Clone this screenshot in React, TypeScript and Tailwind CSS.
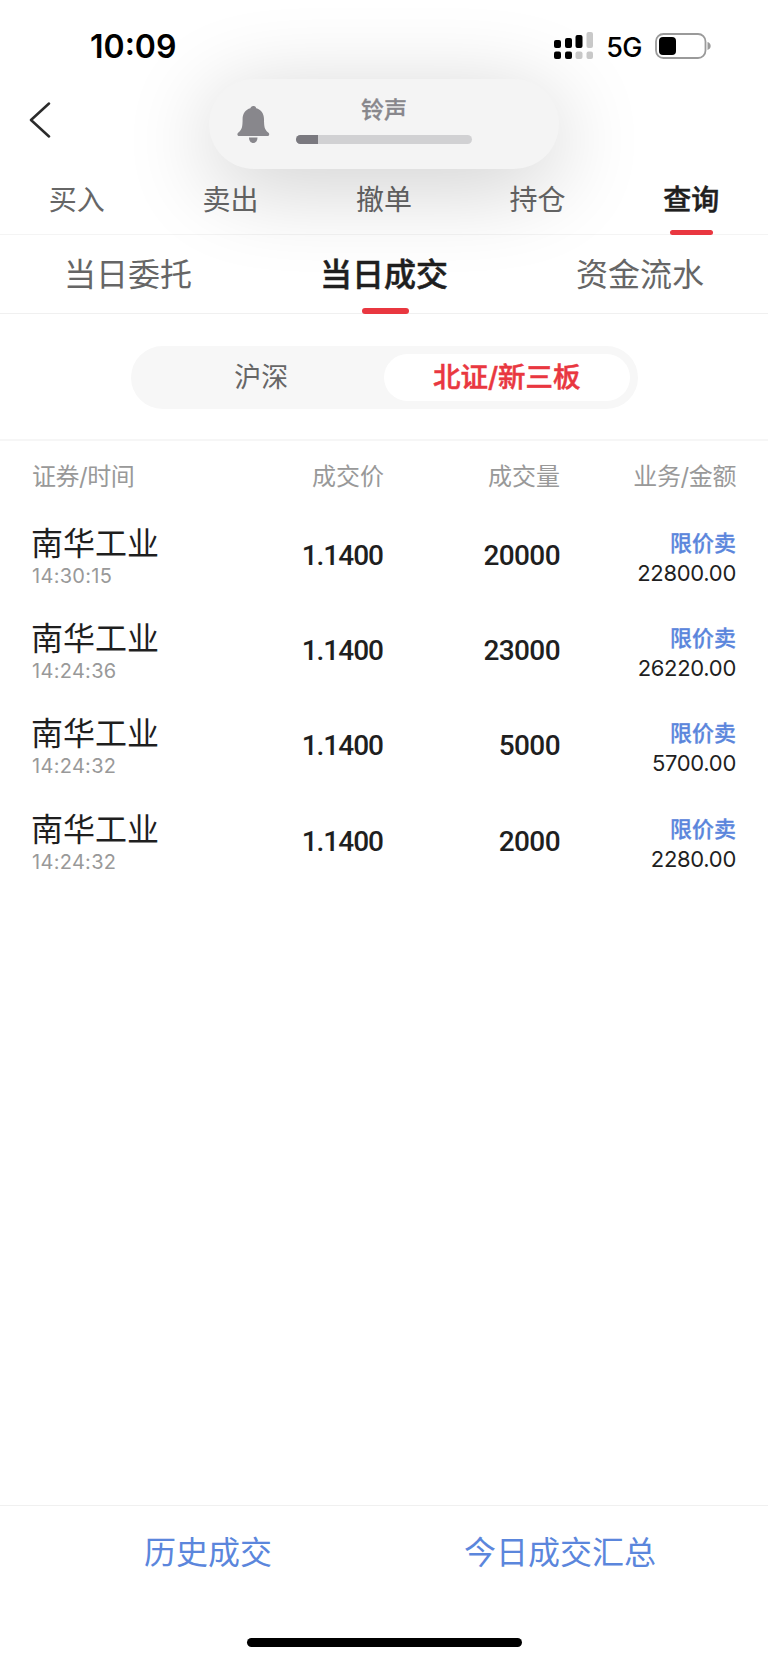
import React from 'react';

const tabs = ['买入', '卖出', '撤单', '持仓', '查询'];
const subTabs = ['当日委托', '当日成交', '资金流水'];

const trades = [
  { name: '南华工业', time: '14:30:15', price: '1.1400', volume: '20000', type: '限价卖', amount: '22800.00' },
  { name: '南华工业', time: '14:24:36', price: '1.1400', volume: '23000', type: '限价卖', amount: '26220.00' },
  { name: '南华工业', time: '14:24:32', price: '1.1400', volume: '5000', type: '限价卖', amount: '5700.00' },
  { name: '南华工业', time: '14:24:32', price: '1.1400', volume: '2000', type: '限价卖', amount: '2280.00' },
];

/** Dual SIM signal: bars on top, dots below. */
const SignalIcon: React.FC = () => (
  <svg width="40" height="28" viewBox="0 0 40 28">
    <rect x="0" y="8" width="7" height="8" rx="2" />
    <rect x="11" y="6" width="7" height="10" rx="2" />
    <rect x="21.5" y="3" width="7" height="13" rx="2" />
    <rect x="32.5" y="0" width="6.5" height="16" rx="2" fill="#c9c9c9" />
    <rect x="0" y="19.5" width="7" height="7.5" rx="2" />
    <rect x="11" y="19.5" width="7" height="7.5" rx="2" />
    <rect x="21.5" y="19.5" width="7" height="7.5" rx="2" fill="#c9c9c9" />
    <rect x="32.5" y="19.5" width="6.5" height="7.5" rx="2" fill="#c9c9c9" />
  </svg>
);

const BatteryIcon: React.FC = () => (
  <svg width="57" height="26" viewBox="0 0 57 26">
    <rect x="1" y="1" width="49.5" height="24" rx="7.5" fill="none" stroke="#9a9a9a" strokeWidth="1.8" />
    <rect x="4" y="4" width="17" height="18" rx="4" />
    <path d="M52.5 9c2 .6 3.2 2.200 3.200 4s-1.200 3.400-3.200 4z" fill="#9a9a9a" />
  </svg>
);

const StatusBar: React.FC = () => (
  <div className="flex h-[76px] items-center justify-between pl-[90px] pr-[56px] pt-[15px]">
    <span className="pt-[2px] text-[32px] font-semibold leading-none text-black">10:09</span>
    <div className="flex items-center">
      <SignalIcon />
      <span className="ml-[12px] mr-[13px] pt-[3px] text-[27px] font-medium leading-none tracking-[-0.5px] text-black">5G</span>
      <BatteryIcon />
    </div>
  </div>
);

/** Floating ringer volume HUD. */
const RingerHud: React.FC = () => (
  <div className="absolute left-[209px] top-[79px] flex h-[90px] w-[350px] rounded-full bg-[#f4f4f4] shadow-[0_16px_90px_rgba(0,0,0,0.2)]">
    <svg className="ml-[28px] mt-[27px]" width="33" height="38" viewBox="0 0 33 38" fill="#88878c">
      <path d="M16.300 0c1.600 0 2.700 1 2.900 2.300C24 3.500 27 7.500 27 13c0 8 .6 10.500 4.200 13.500.9.700 1 1.200 1 2 0 .9-.6 1.500-1.600 1.500H2c-1 0-1.600-.6-1.600-1.500 0-.8.2-1.300 1-2C5 23.500 5.600 21 5.600 13c0-5.500 3-9.500 7.800-10.700C13.600 1 14.700 0 16.300 0z" />
      <path d="M12 31.500h8.500c0 3.300-1.700 5.500-4.200 5.500S12 34.800 12 31.500z" />
    </svg>
    <div className="ml-[26px] flex w-[176px] flex-col items-center pt-[18px]">
      <span className="text-[23px] font-medium leading-[26px] text-[#88878c] [-webkit-text-stroke:0.3px]">铃声</span>
      <div className="mt-[12px] h-[9px] w-full overflow-hidden rounded-full bg-[#d1d1d3]">
        <div className="h-full w-[22px] bg-[#7a797f]" />
      </div>
    </div>
  </div>
);

const App: React.FC = () => (
  <div
    lang="zh-CN"
    className="relative flex h-[1662px] w-[768px] flex-col overflow-hidden bg-white font-['Inter','Noto_Sans_CJK_SC',sans-serif] text-[#1f1f1f]"
  >
    <StatusBar />

    <div className="flex h-[88px] items-center pl-[29px]">
      <svg width="22" height="36" viewBox="0 0 22 36" fill="none" stroke="#2b2b2b" strokeWidth="2.500" strokeLinecap="round" strokeLinejoin="round">
        <path d="M20 1.500 2 18l18 16.500" />
      </svg>
    </div>

    <div className="flex h-[71px] border-b border-[#f4f4f4]">
      {tabs.map((tab) => (
        <div
          key={tab}
          className={`relative flex flex-1 justify-center pt-[16px] text-[28px] leading-[40px] ${tab === '查询' ? 'font-medium text-[#1f1f1f] [-webkit-text-stroke:0.5px]' : 'text-[#666]'}`}
        >
          {tab}
          {tab === '查询' && <span className="absolute -bottom-px h-[5px] w-[43px] rounded-full bg-[#e93740]" />}
        </div>
      ))}
    </div>

    <div className="flex h-[79px] border-b border-[#f0f0f0]">
      {subTabs.map((tab) => (
        <div
          key={tab}
          className={`relative flex flex-1 justify-center pt-[18px] text-[32px] leading-[44px] ${tab === '当日成交' ? 'font-medium text-[#1f1f1f] [-webkit-text-stroke:0.5px]' : 'text-[#666]'}`}
        >
          {tab}
          {tab === '当日成交' && <span className="absolute -bottom-px ml-[2px] h-[6px] w-[47px] rounded-full bg-[#e93740]" />}
        </div>
      ))}
    </div>

    <div className="flex h-[127px] justify-center border-b-2 border-[#f6f6f6] pt-[32px]">
      <div className="flex h-[63px] w-[507px] items-center rounded-full bg-[#f7f7f7] px-[8px] text-[27px] leading-none">
        <span className="flex-1 text-center text-[#666]">沪深</span>
        <span className="flex h-[47px] flex-1 items-center justify-center rounded-full bg-white text-[27.5px] font-medium text-[#e93740] [-webkit-text-stroke:0.5px]">北证/新三板</span>
      </div>
    </div>

    <div className="grid h-[70px] grid-cols-[176px_176px_176px_176px] items-center px-[32px] pt-[2px] text-right text-[24px] leading-none text-[#999]">
      <span className="text-left tracking-[-0.5px]">证券/时间</span>
      <span>成交价</span>
      <span>成交量</span>
      <span className="tracking-[-0.4px]">业务/金额</span>
    </div>

    {trades.map((trade, i) => (
      <div key={i} className="grid h-[95.2px] grid-cols-[176px_176px_176px_176px] px-[32px] text-right">
        <div className="pt-[13px] text-left">
          <div className="-ml-px text-[32px] leading-[39px]">{trade.name}</div>
          <div className="text-[20px] leading-[26px] tracking-[0.3px] text-[#999]">{trade.time}</div>
        </div>
        <div className="pr-px pt-[25px] font-[Roboto,sans-serif] text-[28px] font-medium leading-[40px] tracking-[-1px]">{trade.price}</div>
        <div className="pt-[25px] font-[Roboto,sans-serif] text-[28px] font-medium leading-[40px] tracking-[-0.6px]">{trade.volume}</div>
        <div className="pt-[17px]">
          <div className="text-[22px] font-medium leading-[30px] text-[#5b86dc] [-webkit-text-stroke:0.3px]">{trade.type}</div>
          <div className="text-[22px] leading-[31px] tracking-[-0.3px]">{trade.amount}</div>
        </div>
      </div>
    ))}

    <div className="mt-auto flex h-[157px] border-t border-[#f0f0f0] px-[32px] pt-[25px] text-[32px] leading-[44px] text-[#5b86dc]">
      <span className="flex-1 text-center">历史成交</span>
      <span className="flex-1 text-center">今日成交汇总</span>
    </div>
    <div className="absolute bottom-[15px] left-[247px] h-[9px] w-[275px] rounded-full bg-black" />

    <RingerHud />
  </div>
);

export default App;
